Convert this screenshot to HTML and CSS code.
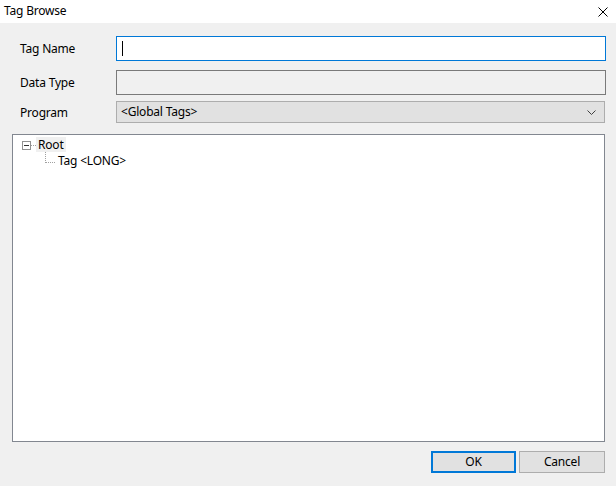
FILE: index.html
```html
<!DOCTYPE html>
<html>
<head>
<meta charset="utf-8">
<link rel="stylesheet" href="styles.css">
</head>
<body>
<div class="window">
  <div class="titlebar">
    <span class="title">Tag Browse</span>
    <svg class="close" width="10" height="10" viewBox="0 0 10 10"><path d="M0.5 0.5 L9.5 9.5 M9.5 0.5 L0.5 9.5" stroke="#000" stroke-width="1" fill="none"/></svg>
  </div>
  <div class="form">
    <div class="row row-name">
      <label class="label">Tag Name</label>
      <div class="field field-input"><span class="caret"></span></div>
    </div>
    <div class="row row-type">
      <label class="label">Data Type</label>
      <div class="field field-disabled"></div>
    </div>
    <div class="row row-prog">
      <label class="label">Program</label>
      <div class="field field-combo">
        <span class="combo-text">&lt;Global Tags&gt;</span>
        <svg class="chev" width="9" height="5" viewBox="0 0 9 5"><path d="M0.5 0.5 L4.5 4.5 L8.5 0.5" stroke="#404040" stroke-width="1" fill="none"/></svg>
      </div>
    </div>
  </div>
  <div class="tree">
    <div class="node node-root">
      <span class="expander"><span class="minus"></span></span>
      <span class="hline"></span>
      <span class="node-label selected">Root</span>
    </div>
    <div class="node node-child">
      <span class="elbow"></span>
      <span class="node-label">Tag &lt;LONG&gt;</span>
    </div>
  </div>
  <div class="buttons">
    <button class="btn btn-default">OK</button>
    <button class="btn">Cancel</button>
  </div>
</div>
</body>
</html>
```
FILE: styles.css
```css
html, body {
  margin: 0;
  padding: 0;
  background: #f0f0f0;
}
body {
  font-family: "Noto Sans", "Open Sans", sans-serif;
  font-size: 12px;
  letter-spacing: -0.2px;
  color: #000;
  width: 616px;
  height: 486px;
  overflow: hidden;
}
.window {
  display: flex;
  flex-direction: column;
}
.titlebar {
  height: 23px;
  background: #fff;
  display: flex;
  align-items: center;
  justify-content: space-between;
  padding: 0 8px 0 4px;
}
.title {
  font-size: 12px;
  line-height: 16px;
  margin-top: -1px;
}
.close {
  display: block;
  margin-top: 1px;
}
.form {
  display: flex;
  flex-direction: column;
  padding: 13px 0 0 20px;
}
.row {
  display: flex;
  align-items: center;
}
.row-type { margin-top: 9px; }
.row-prog { margin-top: 6px; }
.label {
  width: 96px;
  line-height: 16px;
}
.row-prog .label {
  margin-top: 2px;
}
.field {
  box-sizing: border-box;
  width: 490px;
  height: 25px;
}
.field-input {
  background: #fff;
  border: 1px solid #0078d7;
  display: flex;
  align-items: center;
  padding-left: 5px;
}
.caret {
  display: block;
  width: 1px;
  height: 15px;
  background: #000;
}
.field-disabled {
  background: #f0f0f0;
  border: 1px solid #7a7a7a;
}
.field-combo {
  width: 489px;
  height: 22px;
  background: #e1e1e1;
  border: 1px solid #adadad;
  display: flex;
  align-items: center;
  justify-content: space-between;
  padding: 0 8px 0 4px;
}
.combo-text {
  line-height: 16px;
}
.chev { display: block; margin-top: 1px; }
.tree {
  box-sizing: border-box;
  margin: 11px 11px 0 12px;
  width: 593px;
  height: 308px;
  background: #fff;
  border: 1px solid #828790;
  padding: 2px 0 0 9px;
}
.node {
  display: flex;
  align-items: center;
}
.node-root {
  height: 15px;
}
.expander {
  box-sizing: border-box;
  width: 9px;
  height: 9px;
  border: 1px solid #919191;
  display: flex;
  align-items: center;
  justify-content: center;
  margin-top: 1px;
}
.minus {
  display: block;
  width: 5px;
  height: 1px;
  background: #333;
}
.hline {
  display: block;
  width: 5px;
  height: 0;
  border-top: 1px dotted #a0a0a0;
  margin: 1px 0 0 0;
}
.node-label {
  line-height: 15px;
  padding: 0 2px;
}
.selected {
  background: #f0f0f0;
}
.node-child {
  height: 16px;
  align-items: flex-start;
  padding-left: 23px;
}
.elbow {
  display: block;
  box-sizing: border-box;
  width: 10px;
  height: 11px;
  border-left: 1px dotted #a0a0a0;
  border-bottom: 1px dotted #a0a0a0;
  margin-right: 1px;
}
.node-child .node-label {
  line-height: 16px;
  margin-top: 1px;
}
.buttons {
  display: flex;
  justify-content: flex-end;
  gap: 3px;
  padding: 9px 11px 0 0;
}
.btn {
  box-sizing: border-box;
  width: 86px;
  height: 22px;
  background: #e1e1e1;
  border: 1px solid #adadad;
  font-family: "Noto Sans", "Open Sans", sans-serif;
  font-size: 12px;
  letter-spacing: -0.2px;
  color: #000;
  padding: 0;
  line-height: 18px;
}
.btn-default {
  width: 85px;
  border: 2px solid #0078d7;
}
```
